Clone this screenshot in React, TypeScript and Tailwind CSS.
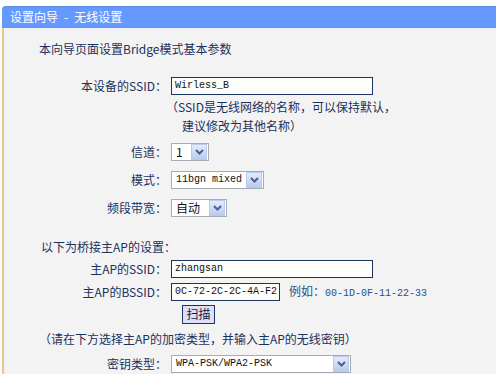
import React from "react";

const Arrow = () => (
  <span className="flex h-[16px] w-[16px] items-center justify-center border border-[#b9c9ef] bg-linear-to-b from-[#e3ebfc] to-[#b8cbee]">
    <svg width="9" height="6" viewBox="0 0 9 6">
      <path d="M1 1 L4.5 4.5 L8 1" stroke="#4d6185" strokeWidth="2" fill="none" />
    </svg>
  </span>
);

const Select: React.FC<{ value: string; width: string; mono?: boolean }> = ({ value, width, mono }) => (
  <div className={`flex h-[18px] items-center justify-between border border-[#a5acb2] bg-white pr-[1px] ${width}`}>
    <span
      className={
        mono
          ? "whitespace-nowrap pl-[4px] font-['Liberation_Mono',monospace] text-[10px] text-[#111]"
          : "whitespace-nowrap pl-[4px] text-[12px] text-[#111]"
      }
    >
      {value}
    </span>
    <Arrow />
  </div>
);

const Input: React.FC<{ value: string; width: string }> = ({ value, width }) => (
  <div className={`flex h-[18px] items-center overflow-hidden border border-[#1c3560] bg-[#fdfdfa] pl-[3px] ${width}`}>
    <span className="whitespace-nowrap font-['Liberation_Mono',monospace] text-[10px] text-[#111]">{value}</span>
  </div>
);

const Row: React.FC<{ label?: string; mt: string; children?: React.ReactNode }> = ({ label, mt, children }) => (
  <div className={`flex h-[20px] items-center ${mt}`}>
    <div className="w-[163px] whitespace-nowrap text-right">{label}</div>
    <div className="ml-[4px] flex items-center">{children}</div>
  </div>
);

export default function App() {
  return (
    <div className="flex h-[374px] w-[496px] flex-col overflow-hidden bg-[#fdfffc] font-['Noto_Sans_CJK_SC',sans-serif] text-[12px] leading-none text-[#1b315e]">
      <div className="h-[7px]" />
      <div className="ml-[2px] flex h-[24px] items-center rounded-tl-[4px] border-t border-b border-t-[#5b8be0] border-b-[#6a94d8] bg-[#6699ff] pl-[8px] text-white">
        <span>设置向导</span>
        <span className="mx-[6px]">-</span>
        <span>无线设置</span>
      </div>
      <div className="ml-[2px] flex flex-1 flex-col border-l-2 border-[#e9c48d] bg-[#f3f3f3] pt-[11px]">
        <div className="flex h-[20px] items-center pl-[35px]">本向导页面设置Bridge模式基本参数</div>

        <Row label="本设备的SSID：" mt="mt-[17px]">
          <Input value="Wirless_B" width="w-[202px]" />
        </Row>
        <div className="mt-[1px] flex h-[19px] items-center pl-[162px]">（SSID是无线网络的名称，可以保持默认，</div>
        <div className="flex h-[19px] items-center pl-[178px]">建议修改为其他名称）</div>

        <Row label="信道：" mt="mt-[7px]">
          <Select value="1" width="w-[38px]" />
        </Row>
        <Row label="模式：" mt="mt-[8px]">
          <Select value="11bgn mixed" width="w-[93px]" mono />
        </Row>
        <Row label="频段带宽：" mt="mt-[8px]">
          <Select value="自动" width="w-[56px]" />
        </Row>

        <div className="mt-[19px] flex h-[20px] items-center pl-[37px]">以下为桥接主AP的设置：</div>

        <Row label="主AP的SSID：" mt="mt-[2px]">
          <Input value="zhangsan" width="w-[202px]" />
        </Row>
        <Row label="主AP的BSSID：" mt="mt-[3px]">
          <Input value="0C-72-2C-2C-4A-F2" width="w-[109px]" />
          <span className="ml-[9px] whitespace-nowrap text-[#2f4f86]">
            例如：<span className="font-['Liberation_Mono',monospace] text-[10px]">00-1D-0F-11-22-33</span>
          </span>
        </Row>
        <Row mt="mt-[2px]">
          <button className="ml-[11px] flex h-[19px] w-[33px] items-center justify-center border border-[#1c3560] bg-[#dcdff7] text-[12px] text-[#1a1a3a]">
            扫描
          </button>
        </Row>

        <div className="mt-[5px] flex h-[20px] items-center pl-[35px]">（请在下方选择主AP的加密类型，并输入主AP的无线密钥）</div>

        <Row label="密钥类型：" mt="mt-[5px]">
          <Select value="WPA-PSK/WPA2-PSK" width="w-[180px]" mono />
        </Row>
      </div>
    </div>
  );
}
